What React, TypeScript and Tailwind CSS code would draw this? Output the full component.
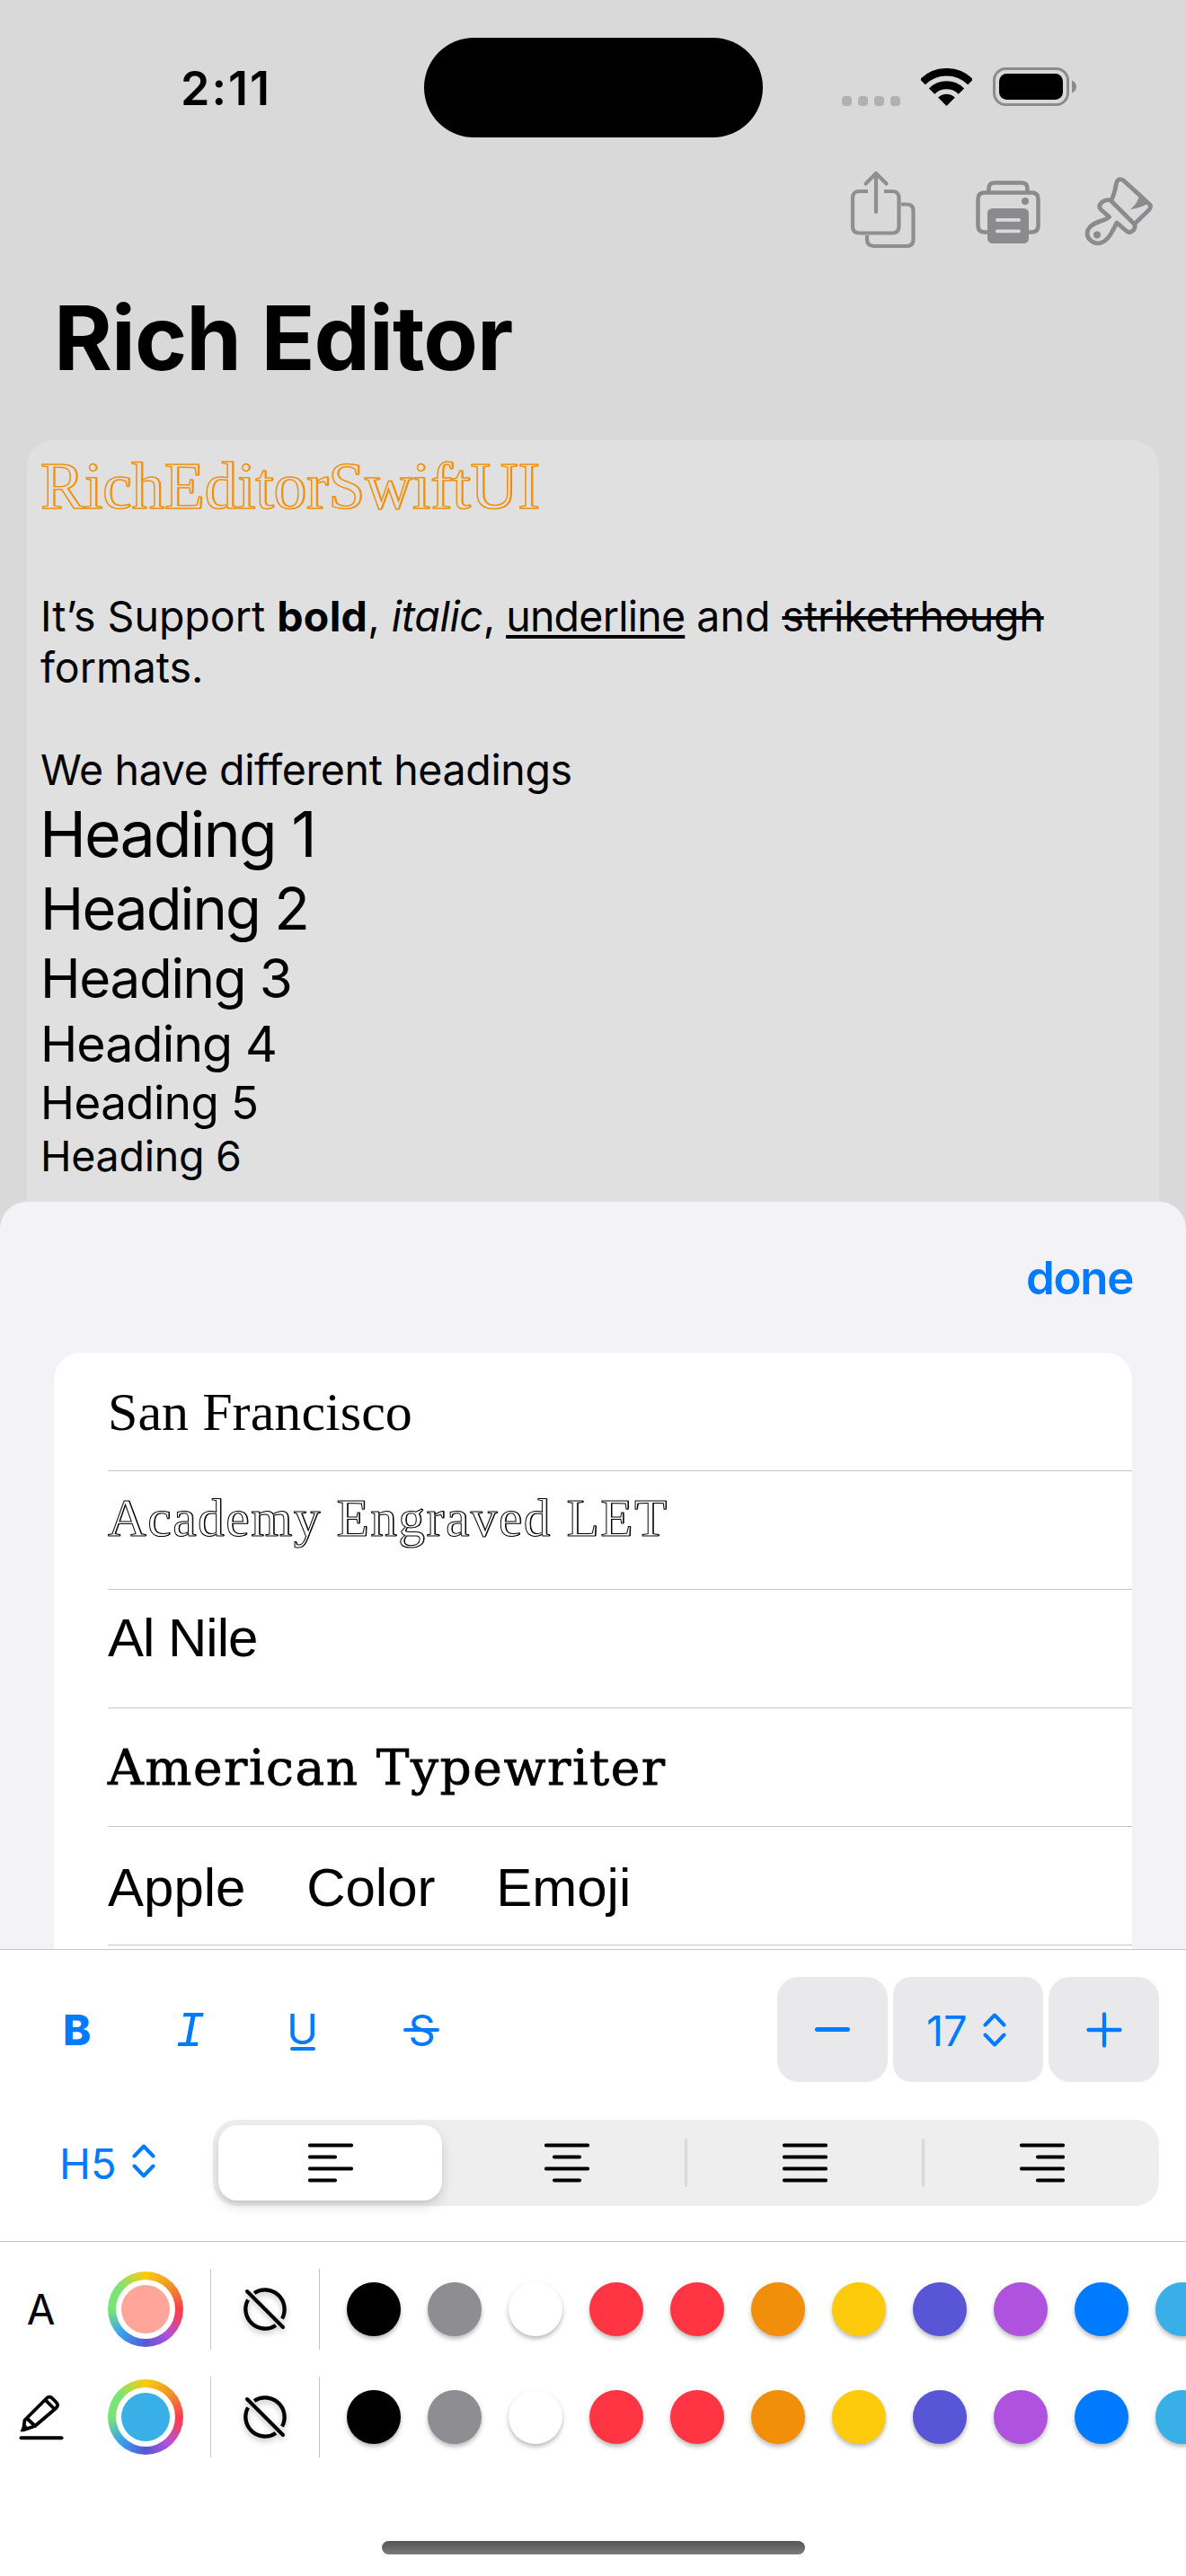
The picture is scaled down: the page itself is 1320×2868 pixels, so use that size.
import React from "react";

const SWATCHES = [
  "bg-black",
  "bg-[#8e8e92]",
  "bg-white",
  "bg-[#ff3543]",
  "bg-[#ff3543]",
  "bg-[#f18f0a]",
  "bg-[#fecb0c]",
  "bg-[#5856d6]",
  "bg-[#af52de]",
  "bg-[#007aff]",
  "bg-[#38afe6]",
];

const HEADINGS = [
  { label: "Heading 1", style: "text-[70px] leading-[86px] tracking-[-2.05px] -ml-px" },
  { label: "Heading 2", style: "text-[65px] leading-[79px] tracking-[-1.9px]" },
  { label: "Heading 3", style: "text-[60px] leading-[76.5px] tracking-[-1.3px]" },
  { label: "Heading 4", style: "text-[55.5px] leading-[67px] tracking-[-0.9px]" },
  { label: "Heading 5", style: "text-[51px] leading-[65px] tracking-[-0.5px]" },
  { label: "Heading 6", style: "text-[46.5px] leading-[54px] tracking-[-0.25px]" },
];

const FONTS = [
  { label: "San Francisco", style: "font-['Liberation_Serif',serif] text-[60px] tracking-[0.05px]" },
  {
    label: "Academy Engraved LET",
    style:
      "font-['Liberation_Serif',serif] text-[59px] tracking-[1.7px] pb-[27px] text-white [-webkit-text-stroke:1px_black] [text-shadow:1px_0_0_black]",
  },
  { label: "Al Nile", style: "font-['Liberation_Sans',sans-serif] text-[60px] tracking-[-1px] pb-[24px]" },
  {
    label: "American Typewriter",
    style: "font-['DejaVu_Serif',serif] text-[55px] tracking-[1.55px] [-webkit-text-stroke:0.8px_black]",
  },
  {
    label: "Apple Color Emoji",
    style: "font-['Liberation_Sans',sans-serif] text-[60px] [word-spacing:51px] pt-[4px]",
  },
];

function Wifi() {
  return (
    <svg width="57" height="42" viewBox="-28.5 -42 57 42" fill="none" stroke="#000">
      <path d="M-26.7 -26.7A37.75 37.75 0 0 1 26.7 -26.7" strokeWidth="8.5" />
      <path d="M-16.4 -16.4A23.2 23.2 0 0 1 16.4 -16.4" strokeWidth="9" />
      <path d="M0 0L-9.4 -9.4A13.3 13.3 0 0 1 9.4 -9.4Z" fill="#000" stroke="none" />
    </svg>
  );
}

function Battery() {
  return (
    <svg width="93" height="43" viewBox="0 0 93 43" fill="none">
      <rect x="1.5" y="1.5" width="82" height="40" rx="13" stroke="#8b8b8b" strokeWidth="3" />
      <rect x="7" y="7" width="71" height="29" rx="8.5" fill="#000" />
      <path d="M88 14.5C91.5 16 93 18.500 93 21.500C93 24.500 91.500 27 88 28.500Z" fill="#8b8b8b" />
    </svg>
  );
}

function ShareIcon() {
  return (
    <svg width="74" height="88" viewBox="0 0 74 88" fill="none" stroke="#8f8f91" strokeWidth="4.200" strokeLinecap="round" strokeLinejoin="round">
      <path d="M29 3V46" />
      <path d="M17.500 14.500L29 3L40.500 14.500" />
      <path d="M20 23H10.500Q3 23 3 30.500V62Q3 69.500 10.500 69.500H47Q54.500 69.500 54.500 62V30.500Q54.500 23 47 23H38" strokeLinecap="butt" />
      <path d="M57 37.500H63Q70.500 37.500 70.500 45V76.500Q70.500 84 63 84H26.500Q19 84 19 76.500V72" strokeLinecap="butt" />
    </svg>
  );
}

function PrinterIcon() {
  return (
    <svg width="74" height="70" viewBox="0 0 74 70" fill="none" stroke="#8b8b8d" strokeWidth="4.500">
      <path d="M15.500 14V9Q15.500 2.500 22 2.500H52Q58.500 2.500 58.500 9V14" />
      <path d="M16 57.500H11Q3.500 57.500 3.500 50V20.500Q3.500 13.500 11 13.500H63Q70.500 13.500 70.500 20.500V50Q70.500 57.500 63 57.500H58" />
      <rect x="14" y="31" width="46" height="39" rx="5.500" fill="#8b8b8d" stroke="none" />
      <rect x="23" y="42" width="28" height="3.800" rx="1.900" fill="#d9d9d9" stroke="none" />
      <rect x="23" y="54.500" width="28" height="3.800" rx="1.900" fill="#d9d9d9" stroke="none" />
      <circle cx="56" cy="23" r="4" fill="#8b8b8d" stroke="none" />
    </svg>
  );
}

function BrushIcon() {
  return (
    <svg width="80" height="80" viewBox="17 15 80 80" fill="none" stroke="#8b8b8d" strokeWidth="4.800" strokeLinejoin="round" strokeLinecap="round">
      <path d="M47.500 43.500C51 38 52 32 53.500 24Q55.500 17 61.500 21L90 47Q93 50 90 53.500L73.500 69.500" />
      <path d="M47.500 43.500L73.500 69.500Q75.500 74 71.500 77Q68 80 64.500 77L54 68C51 73 48 81 44 85Q37 93 28.500 90Q18.500 85 22 75.500C27 66 40 67 45.500 61.500L36 53Q33 49.500 37 45.500Q43 41 47.500 43.500Z" />
      <path d="M80 35L92 47L88 47Q80 52 69 53Q79 45 79 35Z" fill="#8b8b8d" stroke="none" />
      <circle cx="32" cy="81.500" r="4" fill="#8b8b8d" stroke="none" />
    </svg>
  );
}

function UpDown() {
  return (
    <svg width="26" height="38" viewBox="0 0 26 38" fill="none" stroke="#007aff" strokeWidth="4" strokeLinecap="round" strokeLinejoin="round">
      <path d="M2.500 13.500L13 2.500L23.500 13.500" />
      <path d="M2.500 24.500L13 35.500L23.500 24.500" />
    </svg>
  );
}

function AlignIcon({ kind }: { kind: "left" | "center" | "justify" | "right" }) {
  const short = kind === "justify" ? [2, 48] : kind === "left" ? [2, 30] : kind === "center" ? [11, 39] : [20, 48];
  return (
    <svg width="50" height="44" viewBox="0 0 50 44" stroke="#000" strokeWidth="4.200" strokeLinecap="round">
      <path d="M2 2.500H48M2 28.500H48" />
      <path d={`M${short[0]} 15.500H${short[1]}M${short[0]} 41.500H${short[1]}`} />
    </svg>
  );
}

function NoColorIcon() {
  return (
    <svg className="drop-shadow-[0_3px_3px_rgba(0,0,0,0.25)]" width="52" height="52" viewBox="-26 -26 52 52" fill="none" stroke="#000" strokeWidth="4.300" strokeLinecap="butt">
      <path d="M-12 -18A21.700 21.700 0 0 1 19 10.500" />
      <path d="M-19 -10.500A21.700 21.700 0 0 0 12 18" />
      <path d="M-20 -20L20 20" strokeLinecap="round" strokeWidth="4" />
    </svg>
  );
}

function PencilIcon() {
  return (
    <svg width="50" height="52" viewBox="11 16 50 52" fill="none" stroke="#000" strokeWidth="3.800" strokeLinejoin="round" strokeLinecap="round">
      <path d="M17.500 45.500L41.500 21.500Q45 17.800 48.500 21.500L52.500 25.500Q55.500 29 52.500 32L29 52L16 56.500Z" />
      <path d="M41.500 24L50.500 33M20.500 44L29 52" />
      <path d="M17 50L13 58L22 55.500Z" fill="#000" strokeWidth="1" />
      <path d="M13.500 65.300H58.500" strokeWidth="4" />
    </svg>
  );
}

function ColorRow({ icon, selected }: { icon: React.ReactNode; selected: string }) {
  return (
    <div className="flex h-[120px] items-center">
      <div className="flex w-[91px] shrink-0 justify-center">{icon}</div>
      <div className="ml-[29px] flex size-[84px] shrink-0 items-center justify-center rounded-full bg-[conic-gradient(#fecb0c_0deg,#f0962a_45deg,#ff3b4b_90deg,#f04068_105deg,#af52de_140deg,#5856d6_180deg,#38a0f0_225deg,#7be477_270deg,#7be477_310deg,#fecb0c_360deg)]">
        <div className="flex size-[66px] items-center justify-center rounded-full bg-white">
          <div className={`size-[54px] rounded-full ${selected}`} />
        </div>
      </div>
      <div className="ml-[30px] h-[90px] w-px shrink-0 bg-[#c6c6c8]" />
      <div className="flex w-[120px] shrink-0 items-center justify-center">
        <NoColorIcon />
      </div>
      <div className="h-[90px] w-px shrink-0 bg-[#c6c6c8]" />
      <div className="ml-[30px] flex shrink-0 gap-[30px]">
        {SWATCHES.map((color, i) => (
          <div key={i} className={`size-[60px] rounded-full shadow-[0_3px_5px_rgba(0,0,0,0.28)] ${color}`} />
        ))}
      </div>
    </div>
  );
}

export default function App() {
  return (
    <div className="flex h-[2868px] w-[1320px] flex-col overflow-hidden bg-[#d9d9d9] font-['Inter',sans-serif] text-black">
      <div className="flex h-[1368px] shrink-0 flex-col">
        <header className="mt-[42px] flex h-[111px] shrink-0 items-center">
          <div className="flex w-[472px] pl-[201px] pt-[2px] text-[52px] leading-none font-semibold tracking-[2px]">2:11</div>
          <div className="h-[111px] w-[377px] rounded-full bg-black" />
          <div className="flex items-center pl-[88px]">
            <div className="flex gap-[7px] pt-[29px]">
              <span className="h-[11px] w-[11px] rounded-[4px] bg-[#b1b1b1]" />
              <span className="h-[11px] w-[11px] rounded-[4px] bg-[#b1b1b1]" />
              <span className="h-[11px] w-[11px] rounded-[4px] bg-[#b1b1b1]" />
              <span className="h-[11px] w-[11px] rounded-[4px] bg-[#b1b1b1]" />
            </div>
            <div className="ml-[23px] mb-[2px]">
              <Wifi />
            </div>
            <div className="ml-[23px] mb-[2px]">
              <Battery />
            </div>
          </div>
        </header>

        <nav className="mt-[31px] flex h-[100px] shrink-0 items-center justify-end pr-[34px]">
          <ShareIcon />
          <span className="ml-[65px] pt-[3px]">
            <PrinterIcon />
          </span>
          <span className="ml-[47px] pt-[2px]">
            <BrushIcon />
          </span>
        </nav>

        <h1 className="h-[206px] shrink-0 pt-[32px] pl-[60px] text-[99px] leading-[120px] font-bold tracking-[-0.95px]">
          Rich Editor
        </h1>

        <main className="mx-[30px] grow overflow-hidden rounded-t-[30px] bg-[#e0e0e0] pl-[15px]">
          <p className="h-[167.5px] pt-[18px] font-['Liberation_Serif',serif] text-[73px] leading-[67px] text-[#e0e0e0] [-webkit-text-stroke:1.5px_#f18f0a] [text-shadow:1.500px_0_0_#f18f0a]">
            RichEditorSwiftUI
          </p>
          <p className="text-[46.5px] leading-[57.3px] whitespace-nowrap">
            It’s Support <span className="font-bold tracking-[0.3px]">bold</span>,{" "}
            <span className="tracking-[-0.3px] italic">italic</span>,{" "}
            <span className="-ml-[1px] tracking-[-0.75px] underline decoration-[4px] underline-offset-[4px] [text-decoration-skip-ink:none]">
              underline
            </span>{" "}
            and <span className="tracking-[-0.15px] line-through decoration-[4px]">striketrhough</span>
            <br />
            formats.
          </p>
          <p className="mt-[57px] text-[46.5px] leading-[57.3px] tracking-[-0.36px]">We have different headings</p>
          {HEADINGS.map((h) => (
            <p key={h.label} className={h.style}>
              {h.label}
            </p>
          ))}
        </main>
      </div>

      <section className="relative -mt-[30px] flex h-[832px] shrink-0 flex-col overflow-hidden rounded-t-[30px] bg-[#f2f2f7]">
        <div className="flex h-[168px] shrink-0 items-center justify-end pr-[59px] text-[51px] leading-none font-semibold tracking-[-1.3px] text-[#007aff]">
          done
        </div>
        <ul className="mx-[60px] grow rounded-t-[30px] bg-white pl-[60px]">
          {FONTS.map((f) => (
            <li
              key={f.label}
              className={`flex h-[132px] items-center border-b border-[#c6c6c8] leading-[70px] whitespace-nowrap ${f.style}`}
            >
              {f.label}
            </li>
          ))}
        </ul>
      </section>

      <footer className="flex grow flex-col border-t border-[#c6c6c8] bg-white">
        <div className="mt-[30px] flex h-[117px] shrink-0 items-center pr-[30px] text-[47px] leading-none text-[#007aff]">
          <span className="ml-[70px] w-[31px] font-extrabold">B</span>
          <span className="ml-[94px] w-[31px] pt-[7px] font-['Liberation_Mono',monospace] text-[55px] italic">I</span>
          <span className="ml-[93px] flex w-[35px] flex-col items-center pb-[6px]">
            U
            <span className="-mt-[3px] -mb-[4px] h-[4px] w-[28px] rounded-full bg-[#007aff]" />
          </span>
          <span className="ml-[96px] flex w-[39px] justify-center">
            <span className="relative">
              S<span className="absolute top-[22px] left-[-5px] h-[3.500px] w-[40px] rounded-full bg-[#007aff]" />
            </span>
          </span>
          <div className="ml-auto flex h-[117px] gap-[6px]">
            <button className="flex w-[123px] items-center justify-center rounded-[24px] bg-[#e9e9eb]">
              <span className="h-[5px] w-[39px] rounded-full bg-[#007aff]" />
            </button>
            <button className="flex w-[167px] items-center rounded-[20px] bg-[#e9e9eb] pl-[37px]">
              <span className="w-[63px] pt-[2px] text-left">17</span>
              <UpDown />
            </button>
            <button className="flex w-[123px] items-center justify-center rounded-[24px] bg-[#e9e9eb]">
              <svg width="40" height="40" viewBox="0 0 40 40" stroke="#007aff" strokeWidth="4.300" strokeLinecap="round">
                <path d="M2.500 20H37.500M20 2.500V37.500" />
              </svg>
            </button>
          </div>
        </div>

        <div className="mt-[42px] flex h-[96px] shrink-0 items-center pr-[30px]">
          <div className="flex w-[237px] items-center pl-[66px] text-[47px] leading-none text-[#007aff]">
            <span className="w-[81px]">H5</span>
            <span className="pb-[4px]">
              <UpDown />
            </span>
          </div>
          <div className="flex h-[96px] w-[1053px] items-center rounded-[27px] bg-[#eeeeee]">
            <div className="mr-[7px] ml-[6px] flex h-[84px] w-[249px] items-center justify-center rounded-[21px] bg-white shadow-[0_6px_14px_rgba(0,0,0,0.14),0_2px_3px_rgba(0,0,0,0.06)]">
              <AlignIcon kind="left" />
            </div>
            <div className="flex w-[264px] justify-center">
              <AlignIcon kind="center" />
            </div>
            <div className="-ml-[1px] h-[54px] w-[3px] rounded-full bg-[#d9d9da]" />
            <div className="flex w-[261px] justify-center">
              <AlignIcon kind="justify" />
            </div>
            <div className="h-[54px] w-[3px] rounded-full bg-[#d9d9da]" />
            <div className="flex w-[261px] justify-center">
              <AlignIcon kind="right" />
            </div>
          </div>
        </div>

        <div className="mt-[39px] shrink-0 border-t border-[#c6c6c8] pt-[15px]">
          <ColorRow selected="bg-[#ffa599]" icon={<span className="text-[46px] leading-none">A</span>} />
          <ColorRow selected="bg-[#38afe6]" icon={<PencilIcon />} />
        </div>

        <div className="mt-auto mb-6 ml-[425px] h-[15px] w-[471px] rounded-full bg-linear-to-b from-[#555] to-[#7a7a7a]" />
      </footer>
    </div>
  );
}
